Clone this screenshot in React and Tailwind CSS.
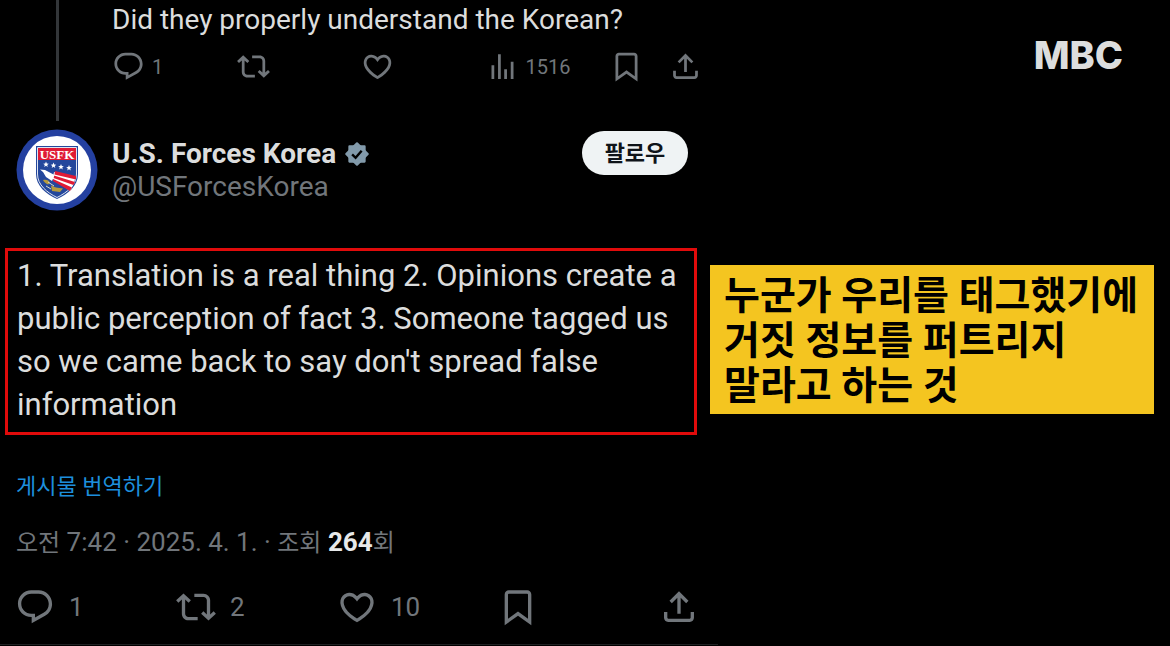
// src/App.jsx
import { clsx } from 'clsx';

const ICONS = {
  reply:
    'M1.751 10c0-4.42 3.584-8 8.005-8h4.366c4.49 0 8.129 3.64 8.129 8.13 0 2.96-1.607 5.68-4.196 7.11l-8.054 4.46v-3.69h-.067c-4.49.1-8.183-3.51-8.183-8.01zm8.005-6c-3.317 0-6.005 2.69-6.005 6 0 3.37 2.77 6.08 6.138 6.01l.351-.01h1.761v2.3l5.087-2.81c1.951-1.08 3.163-3.13 3.163-5.36 0-3.39-2.744-6.13-6.129-6.13H9.756z',
  repost:
    'M4.5 3.88l4.432 4.14-1.364 1.46L5.5 7.55V16c0 1.1.896 2 2 2H13v2H7.5c-2.209 0-4-1.79-4-4V7.55L1.432 9.48.068 8.02 4.5 3.88zM16.5 6H11V4h5.5c2.209 0 4 1.79 4 4v8.45l2.068-1.93 1.364 1.46-4.432 4.14-4.432-4.14 1.364-1.46 2.068 1.93V8c0-1.1-.896-2-2-2z',
  like:
    'M16.697 5.5c-1.222-.06-2.679.51-3.89 2.16l-.805 1.09-.806-1.09C9.984 6.01 8.526 5.44 7.304 5.5c-1.243.07-2.349.78-2.91 1.91-.552 1.12-.633 2.78.479 4.82 1.074 1.97 3.257 4.27 7.129 6.61 3.87-2.34 6.052-4.64 7.126-6.61 1.111-2.04 1.03-3.7.477-4.82-.561-1.13-1.666-1.84-2.908-1.91zm4.187 7.69c-1.351 2.48-4.001 5.12-8.379 7.67l-.503.3-.504-.3c-4.379-2.55-7.029-5.19-8.382-7.67-1.36-2.5-1.41-4.86-.514-6.67.887-1.79 2.647-2.91 4.601-3.01 1.651-.09 3.368.56 4.798 2.01 1.429-1.45 3.146-2.1 4.796-2.01 1.954.1 3.714 1.22 4.601 3.01.896 1.81.846 4.17-.514 6.67z',
  views: 'M8.75 21V3h2v18h-2zM18 21V8.5h2V21h-2zM4 21l.004-10h2L6 21H4zm9.248 0v-7h2v7h-2z',
  bookmark:
    'M4 4.5C4 3.12 5.119 2 6.5 2h11C18.881 2 20 3.12 20 4.5v18.44l-8-5.71-8 5.71V4.5zM6.5 4c-.276 0-.5.22-.5.5v14.56l6-4.29 6 4.29V4.5c0-.28-.224-.5-.5-.5h-11z',
  share:
    'M12 2.59l5.7 5.7-1.41 1.42L13 6.41V16h-2V6.41l-3.3 3.3-1.41-1.42L12 2.59zM21 15l-.02 3.51c0 1.38-1.12 2.49-2.5 2.49H5.5C4.11 21 3 19.88 3 18.5V15h2v3.5c0 .28.22.5.5.5h12.98c.28 0 .5-.22.5-.5L19 15h2z',
};

function Action({ icon, label, count, large, className }) {
  return (
    <button
      type="button"
      aria-label={label}
      className={clsx(
        'flex items-center text-[#71767b]',
        large ? 'gap-[14px] text-[26px] leading-10' : 'gap-[7px] text-[20px] leading-8',
        className,
      )}
    >
      <svg viewBox="0 0 24 24" fill="currentColor" className={clsx('shrink-0', large ? 'size-10' : 'size-[33px]')}>
        <path d={ICONS[icon]} />
      </svg>
      {count && <span>{count}</span>}
    </button>
  );
}

function Star({ x, y }) {
  return (
    <path
      transform={`translate(${x} ${y})`}
      fill="#fff"
      d="M0-2.9L.8-.9 2.800-.8 1.200.5 1.800 2.500 0 1.300-1.800 2.500-1.200.5-2.800-.8-.8-.9z"
    />
  );
}

function Avatar() {
  return (
    <svg viewBox="0 0 82 82" className="size-[82px] shrink-0" role="img" aria-label="USFK">
      <circle cx="41" cy="41" r="40.5" fill="#2440a0" />
      <circle cx="41" cy="41" r="34" fill="#fff" />
      <path d="M20 17h42v28c0 12-10 20-21 25-11-5-21-13-21-25z" fill="#24479c" />
      <path d="M21.500 18.500h39v26.500c0 11-9.500 18.500-19.500 23.500-10-5-19.500-12.500-19.500-23.500z" fill="#24479c" stroke="#dfe5f2" />
      <path d="M22 19h38v12H22z" fill="#e01b35" />
      <text x="41" y="29.500" textAnchor="middle" fill="#fff" fontFamily="Liberation Serif, serif" fontWeight="700" fontSize="13">
        USFK
      </text>
      <Star x="30" y="35.500" />
      <Star x="37.500" y="36.500" />
      <Star x="45" y="38" />
      <Star x="53" y="39" />
      {/* eagle carrying the striped banner */}
      <path d="M38 43l21.500 6-5 13-18-12z" fill="#fff" />
      <path d="M39 42l21 5v3.500L38.500 45.500zM38 46.500l21 6.500-1.500 3-20-7zM37 50l19 8.500-2 3.500-17-10z" fill="#e01b35" />
      <path d="M24 40.500l5 .5 9.500 5-2.500 6-6-4-3-5z" fill="#fff" />
      <path d="M27 51c3-1 6 0 7 3l-2 1.500c-2-1-4-2-5-4.500zM35 56.500l5 2 7 1-3 3.500-8-1z" fill="#b79b3c" />
      <path d="M32 53l6 4M30 57l5 3" stroke="#d8d9c8" strokeWidth="1" />
    </svg>
  );
}

function VerifiedBadge() {
  return (
    <svg viewBox="0 0 24 24" className="size-[26px] shrink-0" role="img" aria-label="Verified">
      <g fill="#829aab" stroke="#829aab" strokeWidth="2" strokeLinejoin="round">
        <path d="M5 5h14v14H5z" />
        <path d="M12 2.100l9.900 9.900-9.900 9.900L2.100 12z" />
      </g>
      <path d="M7.500 12.300l3.200 3.200 5.600-6.500" fill="none" stroke="#000" strokeWidth="2.200" />
    </svg>
  );
}

export default function App() {
  return (
    <div className="min-h-screen overflow-hidden bg-black font-[Roboto,'Noto_Sans_CJK_KR',sans-serif] text-[#dcdddd]">
      <div className="grid grid-cols-[71fr_46fr]">
        <main>
          {/* Parent post, tail end */}
          <article className="flex gap-[14px] pr-2 pl-4">
            <div className="flex w-[82px] shrink-0 justify-center">
              <div className="h-[121px] w-[3px] bg-[#333639]" />
            </div>
            <div className="flex-1 pt-1">
              <p className="text-[28px] leading-8">Did they properly understand the Korean?</p>
              <div className="mt-[14px] flex">
                <Action icon="reply" label="Reply" count="1" className="flex-1" />
                <Action icon="repost" label="Repost" className="flex-1" />
                <Action icon="like" label="Like" className="flex-1" />
                <Action icon="views" label="Views" count="1516" className="flex-1" />
                <div className="flex gap-[26px]">
                  <Action icon="bookmark" label="Bookmark" />
                  <Action icon="share" label="Share" />
                </div>
              </div>
            </div>
          </article>

          {/* Main post */}
          <article>
            <header className="flex gap-[14px] pt-2 pr-[22px] pl-4">
              <Avatar />
              <div className="flex-1 pt-2">
                <div className="flex items-center gap-2 text-[28px] leading-[33px] font-bold">
                  U.S. Forces Korea
                  <VerifiedBadge />
                </div>
                <div className="text-[28px] leading-[33px] text-[#71767b]">@USForcesKorea</div>
              </div>
              <button type="button" className="mt-[2px] h-11 w-[106px] rounded-full bg-[#eff3f4] text-[22px] font-bold text-[#0f1419]">
                팔로우
              </button>
            </header>

            <p className="mt-[37px] mr-[13px] ml-[5px] border-3 border-[#e00b0b] px-[9px] pt-[3px] pb-[6px] text-[31px] leading-[43px]">
              1. Translation is a real thing 2. Opinions create a public perception of fact 3. Someone tagged us so we came
              back to say don't spread false information
            </p>

            <div className="mt-9 pl-4 text-[22px] leading-8">
              <a href="#translate" className="text-[#1d8fdc]">게시물 번역하기</a>
            </div>

            <div className="mt-[23px] pl-4 text-[26px] leading-8 text-[#71767b]">
              <span className="text-[24px]">오전</span> 7:42 · 2025. 4. 1. · <span className="text-[24px]">조회</span>{' '}
              <b className="text-[#e7e9ea]">264</b>
              <span className="text-[24px]">회</span>
            </div>

            <footer className="-mr-2 mt-7 flex border-b border-[#1f2123] pr-[19px] pb-[17px] pl-[15px]">
              <Action large icon="reply" label="Reply" count="1" className="flex-1" />
              <Action large icon="repost" label="Repost" count="2" className="flex-1" />
              <Action large icon="like" label="Like" count="10" className="flex-1" />
              <Action large icon="bookmark" label="Bookmark" className="flex-1" />
              <Action large icon="share" label="Share" />
            </footer>
          </article>
        </main>

        <aside className="pr-4">
          <div className="flex h-[265px] justify-end pt-[35px] pr-[31px]">
            <span className="h-10 font-[Inter,sans-serif] text-[38px] leading-10 font-extrabold">MBC</span>
          </div>
          <p className="bg-[#f4c520] pt-[9px] pb-[5px] pl-[14px] text-[39px] leading-[45px] font-bold text-black">
            누군가 우리를 태그했기에
            <br />
            거짓 정보를 퍼트리지
            <br />
            말라고 하는 것
          </p>
        </aside>
      </div>
    </div>
  );
}
